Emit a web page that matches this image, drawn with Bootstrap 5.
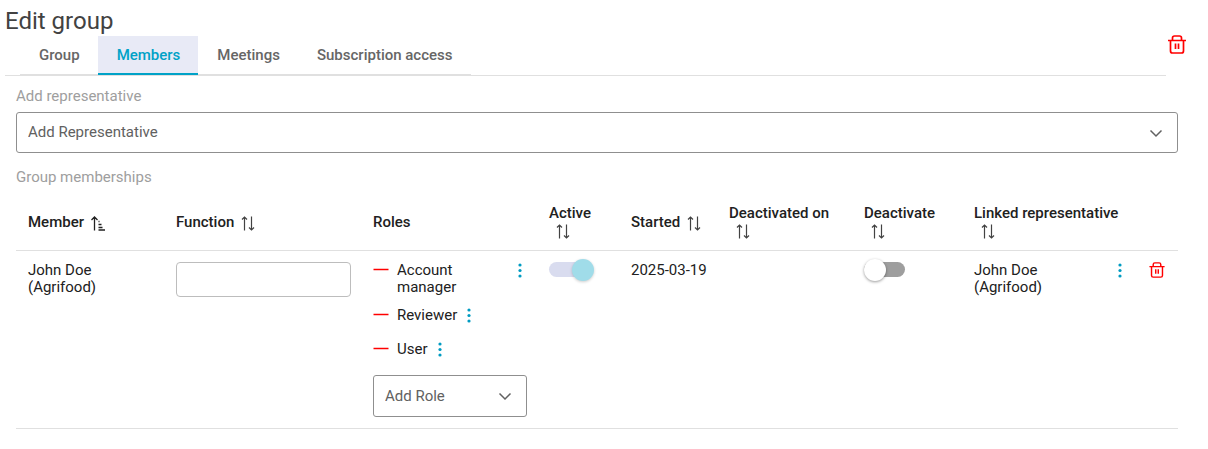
<!DOCTYPE html>
<html lang="en">
<head>
<meta charset="utf-8">
<meta name="viewport" content="width=device-width, initial-scale=1">
<title>Edit group</title>
<link href="https://cdn.jsdelivr.net/npm/bootstrap@5.3.0/dist/css/bootstrap.min.css" rel="stylesheet">
<style>
  body { font-family: Roboto, sans-serif; font-size: 15px; line-height: 17px; color: #212121; }
  .page { padding: 6px 30px 20px 5px; }
  h1 { font-size: 24px; line-height: 30px; font-weight: 400; color: #424242; }
  .btn-icon { padding: 0; border: 0; background: none; color: #009bc2; }
  .btn-icon svg { display: block; }
  .btn-icon.danger { color: #f00; }
  .tab-line { border-bottom: 1px solid #e0e0e0; padding-left: 15px; margin-right: 12px; }
  .tab-line .nav-link { height: 39px; padding: 0 18px 0 19px; border: 0; border-radius: 0; background: none; box-shadow: inset 0 -1px #e0e0e0; color: #666; font-weight: 500; }
  .tab-line .nav-link.active { background: #e8eaf6; color: #00a2c7; box-shadow: inset 0 -2px #00a2c7; }
  .delete-group { right: 22px; top: 35px; }
  .panel { padding-left: 11px; }
  .field-label { display: block; margin: 0; padding: 12px 0 7px; color: #9e9e9e; font-size: 15px; line-height: 17px; font-weight: 400; }
  h2.field-label { padding: 16px 0 8px; }
  .form-select { height: 41px; padding: 0 40px 0 11px; border-color: #8f8f8f; border-radius: 3px; color: #616161; font-size: 15px; line-height: 17px;
    background-image: url("data:image/svg+xml,%3Csvg xmlns='http://www.w3.org/2000/svg' viewBox='0 0 14 14'%3E%3Cpath d='M1.5 4.5 7 10l5.500-5.500' fill='none' stroke='%23616161' stroke-width='1.500'/%3E%3C/svg%3E");
    background-position: right 14px center; background-size: 14px 14px; }
  .members { table-layout: fixed; --bs-table-color: #212121; border-color: #e0e0e0; }
  .members > :not(caption) > * > * { padding: 11px 10px 11px 12px; }
  .members th { font-weight: 500; vertical-align: middle; }
  .sort-icon { margin-left: 7px; vertical-align: -4px; }
  .members .form-control { height: 35px; border-color: #bdbdbd; border-radius: 4px; }
  .members .form-select { height: 42px; }
  .role-row { margin-bottom: 17px; }
  .role-row.role-wrap { margin-bottom: 11px; }
  .role-name { margin: 0 9px 0 8px; }
  .role-wrap .role-name { max-width: 80px; }
  .minus { width: 16px; height: 17px; }
  .switch { appearance: none; position: relative; display: block; width: 41px; height: 15px; margin: 0; border-radius: 8px; background: #9e9e9e; }
  .switch::before { content: ""; position: absolute; left: 0; top: -3px; width: 22px; height: 22px; border-radius: 50%; background: #fff; box-shadow: 0 1px 3px rgba(0,0,0,.4); }
  .switch:checked { background: #d9dcef; }
  .switch:checked::before { left: 23px; background: #a0dce9; box-shadow: 0 1px 3px rgba(0,0,0,.2); }
</style>
</head>
<body>
<svg class="d-none" aria-hidden="true">
  <symbol id="trash" viewBox="0 0 18 19"><path d="M0 5.500h18M2.500 5v11q0 2 2 2h9q2 0 2-2V5M4.500 5V3q0-2 2-2h5q2 0 2 2v2M7.500 8.500v5.500M10.500 8.500v5.500" fill="none" stroke="currentColor" stroke-width="1.700"/></symbol>
  <symbol id="dots" viewBox="0 0 6 15"><g fill="currentColor"><circle cx="3" cy="2" r="1.600"/><circle cx="3" cy="7.500" r="1.600"/><circle cx="3" cy="13" r="1.600"/></g></symbol>
  <symbol id="sort" viewBox="0 0 15 15"><path d="M3.500 14.500V1M1 3.500l2.500-2.500 2.500 2.500M10.500.5V14M8 11.500l2.500 2.500 2.500-2.500" fill="none" stroke="#424242" stroke-width="1.200"/></symbol>
  <symbol id="sorted" viewBox="0 0 15 15"><path d="M3.500 14.500V1M.5 4l3-3 3 3M7.500 5.500h1M7.500 8.500h3M7.500 11.500h4M7.500 14h6.500" fill="none" stroke="#212121" stroke-width="1.300"/></symbol>
  <symbol id="minus" viewBox="0 0 16 17"><path d="M.5 7.500h15" stroke="#f00" stroke-width="1.500"/></symbol>
</svg>
<main class="page position-relative">
  <h1 class="m-0">Edit group</h1>
  <ul class="nav tab-line" role="tablist">
    <li><button class="nav-link" type="button" role="tab">Group</button></li>
    <li><button class="nav-link active" type="button" role="tab" aria-selected="true">Members</button></li>
    <li><button class="nav-link" type="button" role="tab">Meetings</button></li>
    <li><button class="nav-link" type="button" role="tab">Subscription access</button></li>
  </ul>
  <button class="btn-icon danger delete-group position-absolute" type="button" aria-label="Delete group"><svg width="18" height="19"><use href="#trash"/></svg></button>
  <section class="panel">
    <label class="field-label" for="rep">Add representative</label>
    <select class="form-select" id="rep"><option>Add Representative</option></select>
    <h2 class="field-label">Group memberships</h2>
    <table class="table members m-0">
      <colgroup><col style="width:148px"><col><col style="width:176px"><col style="width:82px"><col style="width:98px"><col style="width:135px"><col style="width:110px"><col style="width:175px"><col style="width:41px"></colgroup>
      <thead><tr>
        <th scope="col">Member<wbr><svg class="sort-icon" width="15" height="15"><use href="#sorted"/></svg></th>
        <th scope="col">Function<wbr><svg class="sort-icon" width="15" height="15"><use href="#sort"/></svg></th>
        <th scope="col">Roles</th>
        <th scope="col">Active<wbr><svg class="sort-icon" width="15" height="15"><use href="#sort"/></svg></th>
        <th scope="col">Started<wbr><svg class="sort-icon" width="15" height="15"><use href="#sort"/></svg></th>
        <th scope="col">Deactivated on<wbr><svg class="sort-icon" width="15" height="15"><use href="#sort"/></svg></th>
        <th scope="col">Deactivate<wbr><svg class="sort-icon" width="15" height="15"><use href="#sort"/></svg></th>
        <th scope="col">Linked representative<wbr><svg class="sort-icon" width="15" height="15"><use href="#sort"/></svg></th>
        <td></td>
      </tr></thead>
      <tbody><tr>
        <td>John Doe (Agrifood)</td>
        <td><input class="form-control" type="text" aria-label="Function"></td>
        <td>
          <div class="role-row role-wrap d-flex align-items-start"><button class="btn-icon" type="button" aria-label="Remove Account manager"><svg class="minus"><use href="#minus"/></svg></button><span class="role-name">Account manager</span><button class="btn-icon ms-auto me-1" type="button" aria-label="Account manager options"><svg width="6" height="17"><use href="#dots"/></svg></button></div>
          <div class="role-row d-flex align-items-start"><button class="btn-icon" type="button" aria-label="Remove Reviewer"><svg class="minus"><use href="#minus"/></svg></button><span class="role-name">Reviewer</span><button class="btn-icon" type="button" aria-label="Reviewer options"><svg width="6" height="17"><use href="#dots"/></svg></button></div>
          <div class="role-row d-flex align-items-start"><button class="btn-icon" type="button" aria-label="Remove User"><svg class="minus"><use href="#minus"/></svg></button><span class="role-name">User</span><button class="btn-icon" type="button" aria-label="User options"><svg width="6" height="17"><use href="#dots"/></svg></button></div>
          <select class="form-select" aria-label="Add Role"><option>Add Role</option></select>
        </td>
        <td><input class="switch" type="checkbox" role="switch" aria-label="Active" checked></td>
        <td class="text-nowrap">2025-03-19</td>
        <td></td>
        <td><input class="switch" type="checkbox" role="switch" aria-label="Deactivate"></td>
        <td><div class="d-flex justify-content-between align-items-start"><span>John Doe<br>(Agrifood)</span><button class="btn-icon me-1" type="button" aria-label="Representative options"><svg width="6" height="17"><use href="#dots"/></svg></button></div></td>
        <td><button class="btn-icon danger" type="button" aria-label="Delete member"><svg width="16" height="16"><use href="#trash"/></svg></button></td>
      </tr></tbody>
    </table>
  </section>
</main>
<script src="https://cdn.jsdelivr.net/npm/bootstrap@5.3.0/dist/js/bootstrap.bundle.min.js"></script>
</body>
</html>
